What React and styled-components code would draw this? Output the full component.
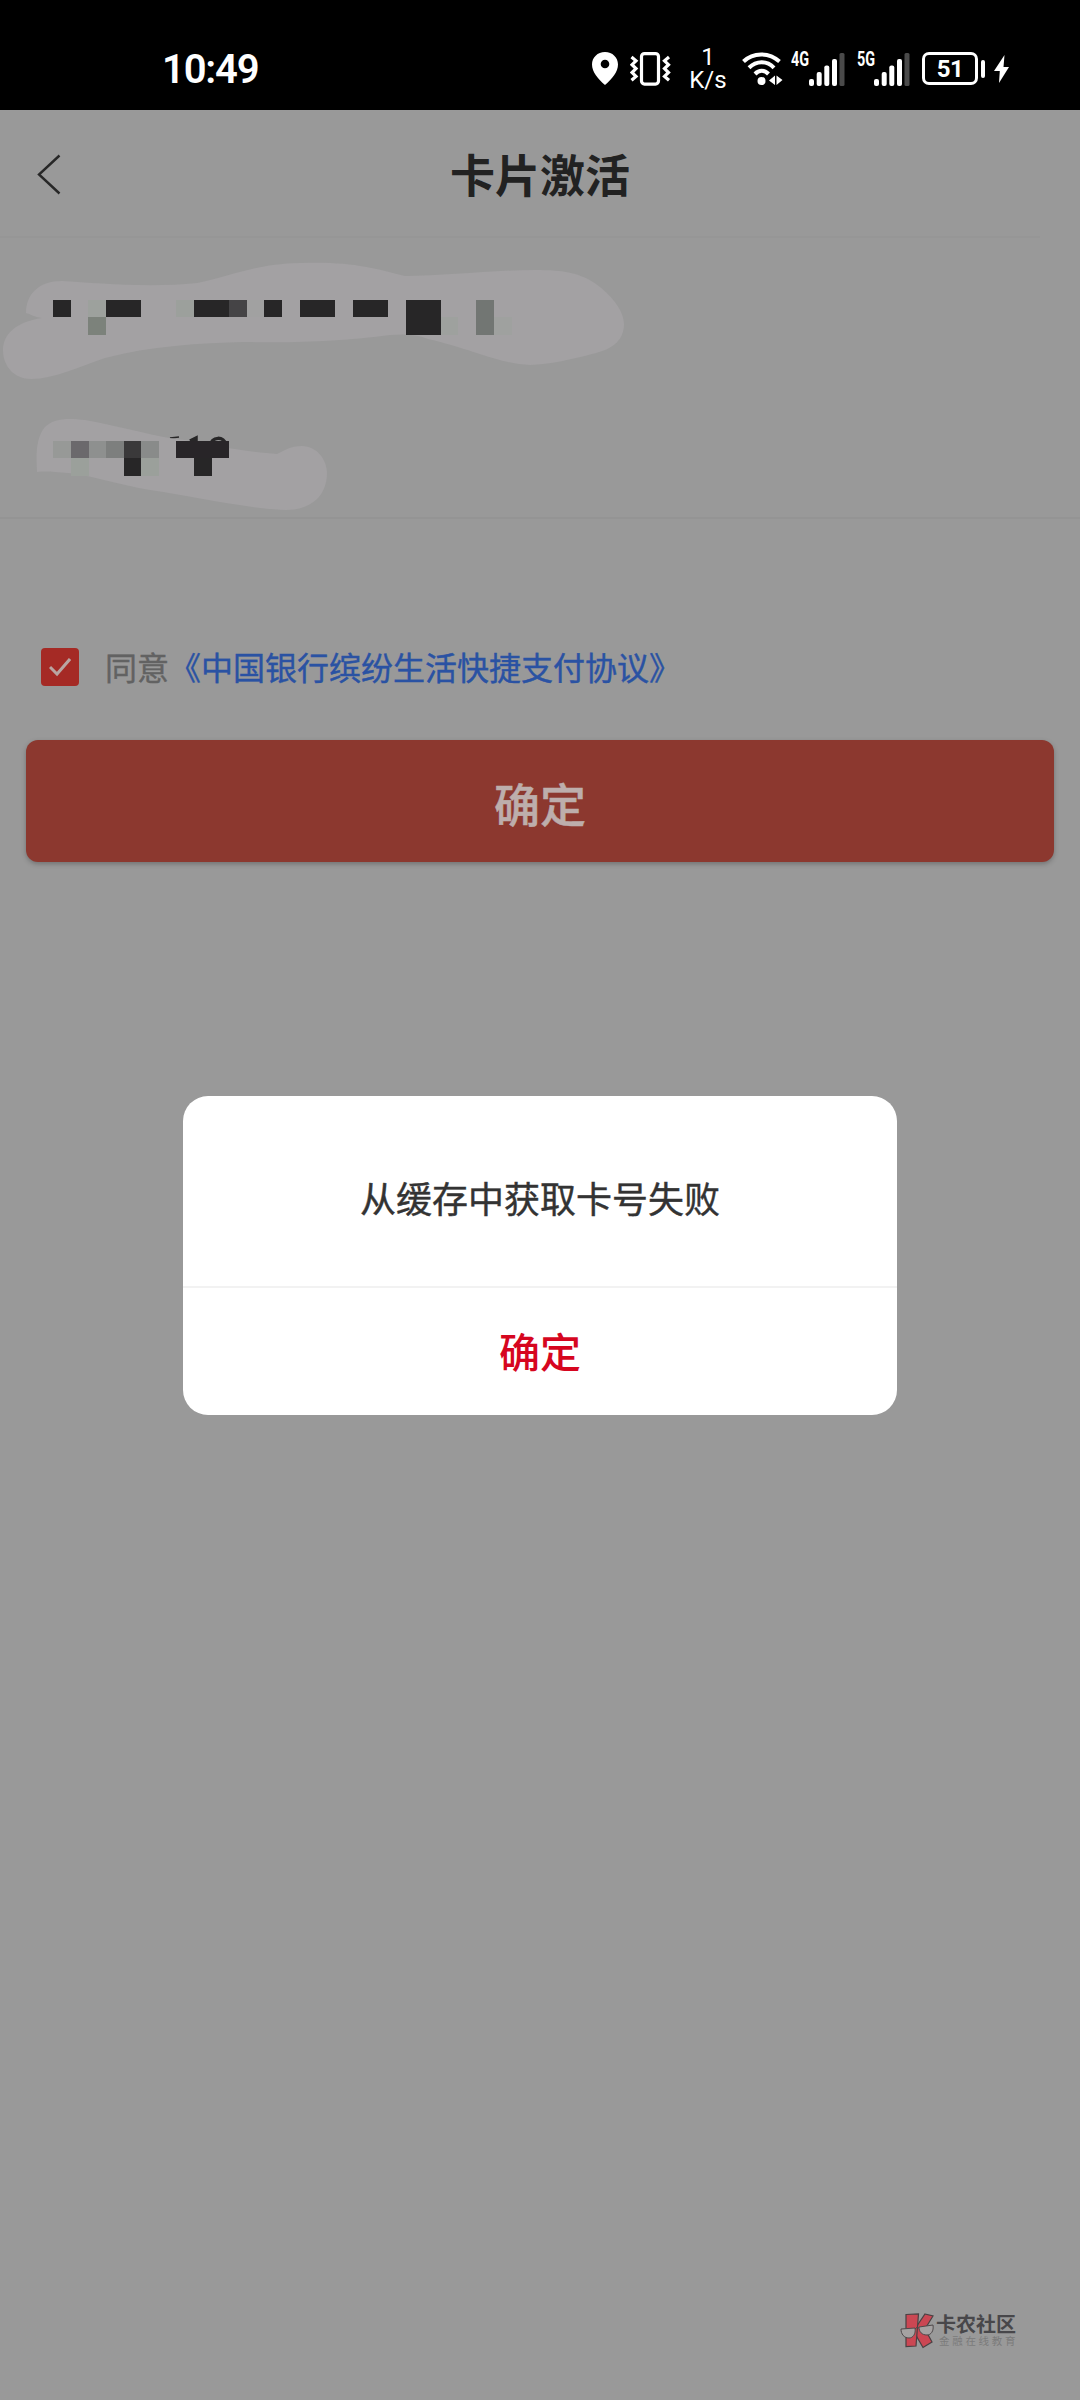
import React from 'react';
import styled, { createGlobalStyle } from 'styled-components';

const GlobalStyle = createGlobalStyle`
  * {
    box-sizing: border-box;
  }
  body {
    margin: 0;
    background: #999999;
    font-family: 'Noto Sans CJK SC', sans-serif;
  }
`;

// mosaic blocks: x, y, width, height, color
const nameBlocks = [
  [53, 299.5, 18, 17.5, '#272627'],
  [88, 299.5, 18, 17.5, '#9da19d'],
  [88, 317, 18, 18, '#7c827b'],
  [106, 299.5, 35, 17.5, '#272627'],
  [176, 299.5, 18, 17.5, '#9ca09c'],
  [194, 299.5, 35, 17.5, '#272627'],
  [229, 299.5, 18, 17.5, '#454446'],
  [247, 299.5, 17, 17.5, '#a1a1a1'],
  [264, 299.5, 18, 17.5, '#272627'],
  [300, 299.5, 35, 17.5, '#272627'],
  [352.5, 299.5, 35, 17.5, '#272627'],
  [405.5, 299.5, 35, 35.5, '#272627'],
  [441, 317, 17, 18, '#9ea19e'],
  [476, 299.5, 17.5, 35.5, '#727673'],
  [493.5, 317, 18, 18, '#9fa19f'],
];

const phoneBlocks = [
  [53, 440.5, 18, 17.5, '#979997'],
  [71, 440.5, 17.5, 17.5, '#6b696c'],
  [88.5, 440.5, 17.5, 17.5, '#8e908f'],
  [106, 440.5, 17.5, 17.5, '#7d7f7e'],
  [123.5, 440.5, 17.5, 17.5, '#3a393a'],
  [141, 440.5, 17.5, 17.5, '#898b8a'],
  [71, 458, 17.5, 18, '#9ba09b'],
  [123.5, 458, 17.5, 18, '#272627'],
  [141, 458, 17.5, 18, '#9ba09b'],
  [176, 440.5, 53, 17.5, '#282528'],
  [194, 458, 17.5, 18, '#272627'],
];

const Blocks = ({ items }) =>
  items.map(([x, y, w, h, fill]) => (
    <rect key={`${x}-${y}`} x={x} y={y} width={w} height={h} fill={fill} shapeRendering="crispEdges" />
  ));

const Signal = ({ label }) => (
  <SignalBox>
    <SignalLabel>
      <span>{label}</span>
    </SignalLabel>
    <svg width="36" height="34" viewBox="0 0 36 34" fill="#fff">
      <rect x="0" y="27" width="5" height="7" rx="2" />
      <rect x="7.7" y="20" width="5" height="14" rx="2" />
      <rect x="15.3" y="13.5" width="5" height="20.5" rx="2" />
      <rect x="23" y="7" width="5" height="27" rx="2" />
      <rect x="30.5" y="1" width="5" height="33" rx="1.5" fill="#4a4a4a" />
    </svg>
  </SignalBox>
);

const StatusIcons = () => (
  <Icons>
    <svg width="26" height="33" viewBox="0 0 26 33">
      <path
        fill="#fff"
        fillRule="evenodd"
        d="M13 0C5.500 0 0 5.500 0 12.500C0 20 6 27 13 33C20 27 26 20 26 12.500C26 5.500 20.500 0 13 0ZM13 7.700a4.300 4.300 0 1 1 0 8.600a4.300 4.300 0 0 1 0-8.600Z"
      />
    </svg>
    <Vibrate width="42" height="34" viewBox="0 0 42 34" fill="none" stroke="#fff" strokeWidth="3.200">
      <rect x="11.500" y="1.600" width="17" height="30.500" rx="3" />
      <path d="M1.500 5l4.500 3.800l-4 3.900l4 3.900l-4 3.900l4 3.900l-4.500 3.900" />
      <path d="M39 5l-4.500 3.800l4 3.900l-4 3.900l4 3.900l-4 3.900l4.500 3.900" />
    </Vibrate>
    <Speed>
      <span>1</span>
      <span>K/s</span>
    </Speed>
    <Wifi width="42" height="36" viewBox="0 0 42 36" fill="none" stroke="#fff" strokeWidth="4">
      <path d="M2.500 9.500C12 0 28 0 38.500 9.500" />
      <path d="M8 15.800C15.500 8.500 26 8.500 33 15.800" />
      <path d="M14 22C18 17.800 23.500 17.800 27.500 22" />
      <circle cx="20.500" cy="29" r="4" fill="#fff" stroke="none" />
      <path fill="#fff" stroke="none" d="M34 23.500v9.500l-6-4.500zM35.500 23.500v9.500l6-5z" />
    </Wifi>
    <Signal label="4G" />
    <Signal label="5G" />
    <Battery>
      <BatteryBody>51</BatteryBody>
      <BatteryTip />
    </Battery>
    <Bolt width="15" height="28" viewBox="0 0 15 28" fill="#fff">
      <path d="M10.500 0L0 16H5.800L5 28L15 12H9.500Z" />
    </Bolt>
  </Icons>
);

export default function App() {
  return (
    <Screen>
      <GlobalStyle />
      <StatusBar>
        <Time>10:49</Time>
        <StatusIcons />
      </StatusBar>
      <Header>
        <Back width="24" height="42" viewBox="0 0 24 42">
          <path d="M22.500 2.500L2 21.500L22.500 40.500" fill="none" stroke="#272727" strokeWidth="2.400" />
        </Back>
        <Title>卡片激活</Title>
      </Header>
      <HeaderLine />
      <CardInfo>
        <svg width="1080" height="279" viewBox="0 238 1080 279">
          <path
            fill="#a3a1a3"
            d="M26 313C26 294 39 281 62 281C95 283 150 288 197 283C235 275 255 264 300 263C350 261 374 268 405 276C445 276 490 270 535 270C565 270 580 273 596 284C610 294 624 310 624 324C624 342 610 350 592 354C570 360 550 364 530 365C500 364 475 350 428 339C415 334 405 334 390 335C345 341 300 343 245 342C200 343 150 346 105 358C80 366 55 379 31 379C15 379 3 367 3 350C3 335 15 322 42 318C34 317 30 314 26 313Z"
          />
          <Blocks items={nameBlocks} />
          <g fill="none" stroke="#272627" strokeWidth="3.500">
            <path d="M170 438l9-1" strokeWidth="1.500" />
            <path d="M190 441l6-3v6" />
            <path d="M210 446C212 436 224 436 226 445" />
          </g>
          <path
            fill="#a3a1a3"
            d="M37 472C36 455 36 437 45 427C54 418 68 418 85 420C120 426 160 438 185 440C220 447 255 453 277 454C286 450 290 446 302 446C317 446 327 460 327 473C327 495 312 510 286 510C250 509 190 496 150 490C120 485 90 475 68 473C55 472 46 471 37 472Z"
          />
          <Blocks items={phoneBlocks} />
        </svg>
      </CardInfo>
      <Agreement>
        <Checkbox>
          <svg width="22" height="20" viewBox="0 0 22 20" fill="none" stroke="#b9a5a2" strokeWidth="3">
            <path d="M1 10L8 17L21 2" />
          </svg>
        </Checkbox>
        <AgreeText>
          同意<Link>《中国银行缤纷生活快捷支付协议》</Link>
        </AgreeText>
      </Agreement>
      <SubmitButton>确定</SubmitButton>
      <Dialog>
        <Message>从缓存中获取卡号失败</Message>
        <DialogButton>确定</DialogButton>
      </Dialog>
      <Watermark>
        <svg width="34" height="36" viewBox="0 0 34 36">
          <g fill="#cb4753" stroke="#4a4143" strokeWidth="1.200">
            <path d="M25 1L33 3L25 16L32 29L23 34.500L13.500 18Z" />
            <path d="M6 1.500L18.500 1L16 33L6 33.500Z" />
          </g>
          <g fill="#a5a2a2" stroke="#4f4a4b" strokeWidth="1">
            <path d="M1 16L15 15C16 21 13 25 9 25C4 25 1 21 1 16Z" />
            <path d="M19 14L33 12C34 18 31 22 27 22C22 22 19 19 19 14Z" />
            <path d="M15 16Q17 13 19 15" fill="none" />
          </g>
        </svg>
        <div>
          <Brand>卡农社区</Brand>
          <Slogan>金融在线教育</Slogan>
        </div>
      </Watermark>
    </Screen>
  );
}

const Screen = styled.main`
  display: flex;
  flex-direction: column;
  width: 1080px;
  height: 2400px;
  background: #999999;
  overflow: hidden;
`;
const StatusBar = styled.div`
  display: flex;
  align-items: flex-start;
  justify-content: space-between;
  height: 110px;
  padding: 0 71px 0 162px;
  background: #000;
  color: #fff;
`;
const Time = styled.div`
  margin-top: 46px;
  font-family: Roboto, sans-serif;
  font-weight: 600;
  font-size: 40px;
  line-height: 48px;
  letter-spacing: -1.2px;
`;
const Icons = styled.div`
  display: flex;
  align-items: flex-start;
  padding-top: 52px;
  svg {
    flex: none;
  }
`;
const Vibrate = styled.svg`
  margin-left: 12px;
`;
const Wifi = styled.svg`
  margin-right: 8px;
`;
const Bolt = styled.svg`
  margin-top: 3px;
`;
const Speed = styled.div`
  display: flex;
  flex-direction: column;
  align-items: center;
  width: 40px;
  margin: -6px 13px 0 16px;
  font-family: Roboto, sans-serif;
  font-weight: 400;
  font-size: 24px;
  line-height: 23px;
`;
const SignalBox = styled.div`
  display: flex;
  width: 53.5px;
  margin-right: 12px;
`;
const SignalLabel = styled.span`
  width: 17.5px;
  font-family: Roboto, sans-serif;
  font-weight: 700;
  font-size: 20px;
  line-height: 14px;
  span {
    display: inline-block;
    transform: scaleX(0.72);
    transform-origin: left;
  }
`;
const Battery = styled.div`
  display: flex;
  align-items: center;
  margin-right: 9px;
`;
const BatteryBody = styled.div`
  display: flex;
  align-items: center;
  justify-content: center;
  width: 56px;
  height: 33px;
  border: 3px solid #fff;
  border-radius: 7px;
  font-family: Roboto, sans-serif;
  font-weight: 700;
  font-size: 24px;
  line-height: 24px;
  letter-spacing: -0.5px;
`;
const BatteryTip = styled.span`
  width: 4px;
  height: 18px;
  margin-left: 3px;
  border-radius: 2px;
  background: #fff;
`;
const Header = styled.header`
  display: flex;
  align-items: center;
  height: 126px;
  padding: 2px 0 0 37px;
`;
const HeaderLine = styled.div`
  width: 1040px;
  height: 2px;
  background: #969696;
`;
const Back = styled.svg`
  flex: none;
`;
const Title = styled.h1`
  flex: 1;
  margin: 0 61px 0 0;
  text-align: center;
  font-size: 45px;
  line-height: 60px;
  font-weight: 700;
  color: #222;
`;
const CardInfo = styled.section`
  display: flex;
  height: 281px;
  border-bottom: 2px solid #949494;
`;
const Agreement = styled.div`
  display: flex;
  align-items: center;
  height: 48px;
  margin-top: 124px;
  padding-left: 41px;
`;
const Checkbox = styled.span`
  display: flex;
  align-items: center;
  justify-content: center;
  width: 38px;
  height: 38px;
  border-radius: 4px;
  background: #a52a25;
`;
const AgreeText = styled.p`
  margin: -2px 0 0 26px;
  font-size: 32px;
  line-height: 48px;
  color: #626262;
  -webkit-text-stroke: 0.4px currentColor;
`;
const Link = styled.span`
  color: #2a52a3;
`;
const SubmitButton = styled.button`
  height: 122px;
  margin: 49px 26px 0;
  padding: 2px 0 0;
  border: 0;
  border-radius: 12px;
  background: #8c382f;
  box-shadow: 0 2px 5px rgba(0, 0, 0, 0.25);
  color: #bdaeac;
  font-family: inherit;
  font-weight: 500;
  font-size: 46px;
  -webkit-text-stroke: 0.5px currentColor;
`;
const Dialog = styled.div`
  display: flex;
  flex-direction: column;
  width: 714px;
  height: 319px;
  margin: 234px auto 0;
  border-radius: 25px;
  background: #fff;
`;
const Message = styled.div`
  display: flex;
  align-items: center;
  justify-content: center;
  height: 192px;
  padding-top: 11px;
  border-bottom: 2px solid #f2f2f2;
  font-size: 36px;
  color: #333;
  -webkit-text-stroke: 0.4px currentColor;
`;
const DialogButton = styled.button`
  flex: 1;
  padding: 0 0 3px;
  border: 0;
  background: none;
  color: #d6061f;
  font-family: inherit;
  font-weight: 500;
  font-size: 41px;
`;
const Watermark = styled.div`
  display: flex;
  align-items: flex-start;
  gap: 2px;
  margin: 898px 0 0 900px;
`;
const Brand = styled.div`
  margin-top: 1px;
  font-size: 20px;
  line-height: 20px;
  font-weight: 700;
  color: #48474a;
`;
const Slogan = styled.div`
  margin: 1px 0 0 3px;
  font-size: 10.5px;
  line-height: 12px;
  letter-spacing: 2.7px;
  color: #7b7b7b;
`;
